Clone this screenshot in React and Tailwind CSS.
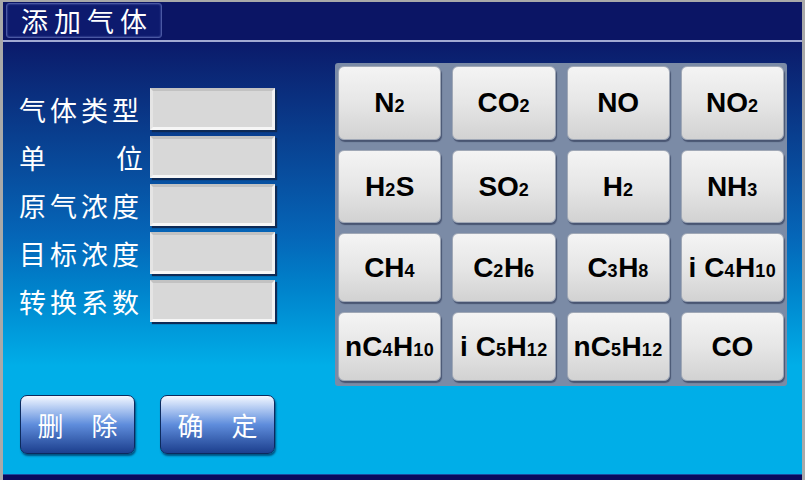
import React from 'react';

const cjk = { fontFamily: '"Noto Sans CJK SC", "Noto Sans", sans-serif' };
const latin = { fontFamily: '"Liberation Sans", Arial, sans-serif' };

// 气体列表: [主体, 下标] 片段
const gases = [
  [['N'], ['2', 1]],
  [['CO'], ['2', 1]],
  [['NO']],
  [['NO'], ['2', 1]],
  [['H'], ['2', 1], ['S']],
  [['SO'], ['2', 1]],
  [['H'], ['2', 1]],
  [['NH'], ['3', 1]],
  [['CH'], ['4', 1]],
  [['C'], ['2', 1], ['H'], ['6', 1]],
  [['C'], ['3', 1], ['H'], ['8', 1]],
  [['i C'], ['4', 1], ['H'], ['10', 1]],
  [['nC'], ['4', 1], ['H'], ['10', 1]],
  [['i C'], ['5', 1], ['H'], ['12', 1]],
  [['nC'], ['5', 1], ['H'], ['12', 1]],
  [['CO']],
];

const campos = ['气体类型', null, '原气浓度', '目标浓度', '转换系数'];

function GasButton({ parts }) {
  return (
    <button className="flex items-center justify-center rounded-[6px] border border-[#a0a8b6] bg-gradient-to-b from-[#f4f4f4] via-[#e6e6e6] to-[#d2d2d2] shadow-[1px_2px_1px_rgba(40,50,80,0.6)] text-black whitespace-nowrap">
      <span className="font-bold text-[28px] leading-none" style={latin}>
        {parts.map(([t, sub], i) =>
          sub ? (
            <span key={i} className="text-[18px] font-semibold tracking-[0.5px]">{t}</span>
          ) : (
            <span key={i}>{t}</span>
          )
        )}
      </span>
    </button>
  );
}

function Campo({ label }) {
  return (
    <div className="flex items-center h-[42px]">
      {label ? (
        <span className="w-[131px] text-[27px] text-white tracking-[4px] leading-none" style={cjk}>{label}</span>
      ) : (
        <span className="w-[131px] pr-[7px] flex justify-between text-[27px] text-white leading-none" style={cjk}>
          <span>单</span><span>位</span>
        </span>
      )}
      <div className="w-[125px] h-[42px] bg-[#d8d8d8] border-[3px] border-t-[#c2c2c2] border-l-[#e4e4e4] border-r-[#f2f2f2] border-b-[#f6f6f6] shadow-[2px_2px_1px_#0e2a55]" />
    </div>
  );
}

function AccionBtn({ a, b }) {
  return (
    <button className="w-[115px] h-[59px] rounded-[7px] border border-[#0c2a5e] bg-gradient-to-b from-[#f4f8ff] via-[#5f8ddc] to-[#1d3f8e] shadow-[1px_2px_2px_rgba(0,20,60,0.6)] text-white text-[26px] leading-none flex items-center justify-center gap-[28px] whitespace-nowrap" style={cjk}>
      <span>{a}</span>
      <span>{b}</span>
    </button>
  );
}

export default function App() {
  return (
    <div className="w-[805px] h-[480px] bg-[#a9a9a9] pl-[3px] pr-[3px] pt-[2px] overflow-hidden">
      <div className="flex flex-col h-full">
        {/* cabecera */}
        <div className="h-[38px] bg-[#0b1565] px-[3px] pt-[1px]">
          <div className="w-[156px] h-[35px] rounded-[3px] border border-[#4a58a4] bg-[#0d1a6e] shadow-[inset_0_0_2px_#6a78c0] flex items-center pl-[14px]">
            <span className="text-white text-[27px] tracking-[6px] leading-none" style={cjk}>添加气体</span>
          </div>
        </div>
        <div className="h-[2px] bg-[#a2aad2]" />

        {/* cuerpo */}
        <div className="flex-1 bg-gradient-to-b from-[#0b1a6a] via-[#0566b8] via-45% to-[#00aee8] to-75% flex">
          <div className="flex flex-col pl-[16px] pt-[46px] w-[330px]">
            <div className="flex flex-col gap-[6px]">
              {campos.map((c, i) => <Campo key={i} label={c} />)}
            </div>
            <div className="flex gap-[25px] mt-[73px] pl-[1px]">
              <AccionBtn a="删" b="除" />
              <AccionBtn a="确" b="定" />
            </div>
          </div>
          <div className="pt-[21px] pl-[2px]">
            <div className="w-[452px] h-[323px] bg-[#7b8ba6] rounded-[3px] p-[3px] grid grid-cols-4 grid-rows-[74px_73px_69px_69px] gap-x-[11px] gap-y-[10px]">
              {gases.map((g, i) => <GasButton key={i} parts={g} />)}
            </div>
          </div>
        </div>
        <div className="h-[1px] bg-[#1a4aa0]" />
        <div className="h-[5px] bg-[#0a0a5c]" />
      </div>
    </div>
  );
}
